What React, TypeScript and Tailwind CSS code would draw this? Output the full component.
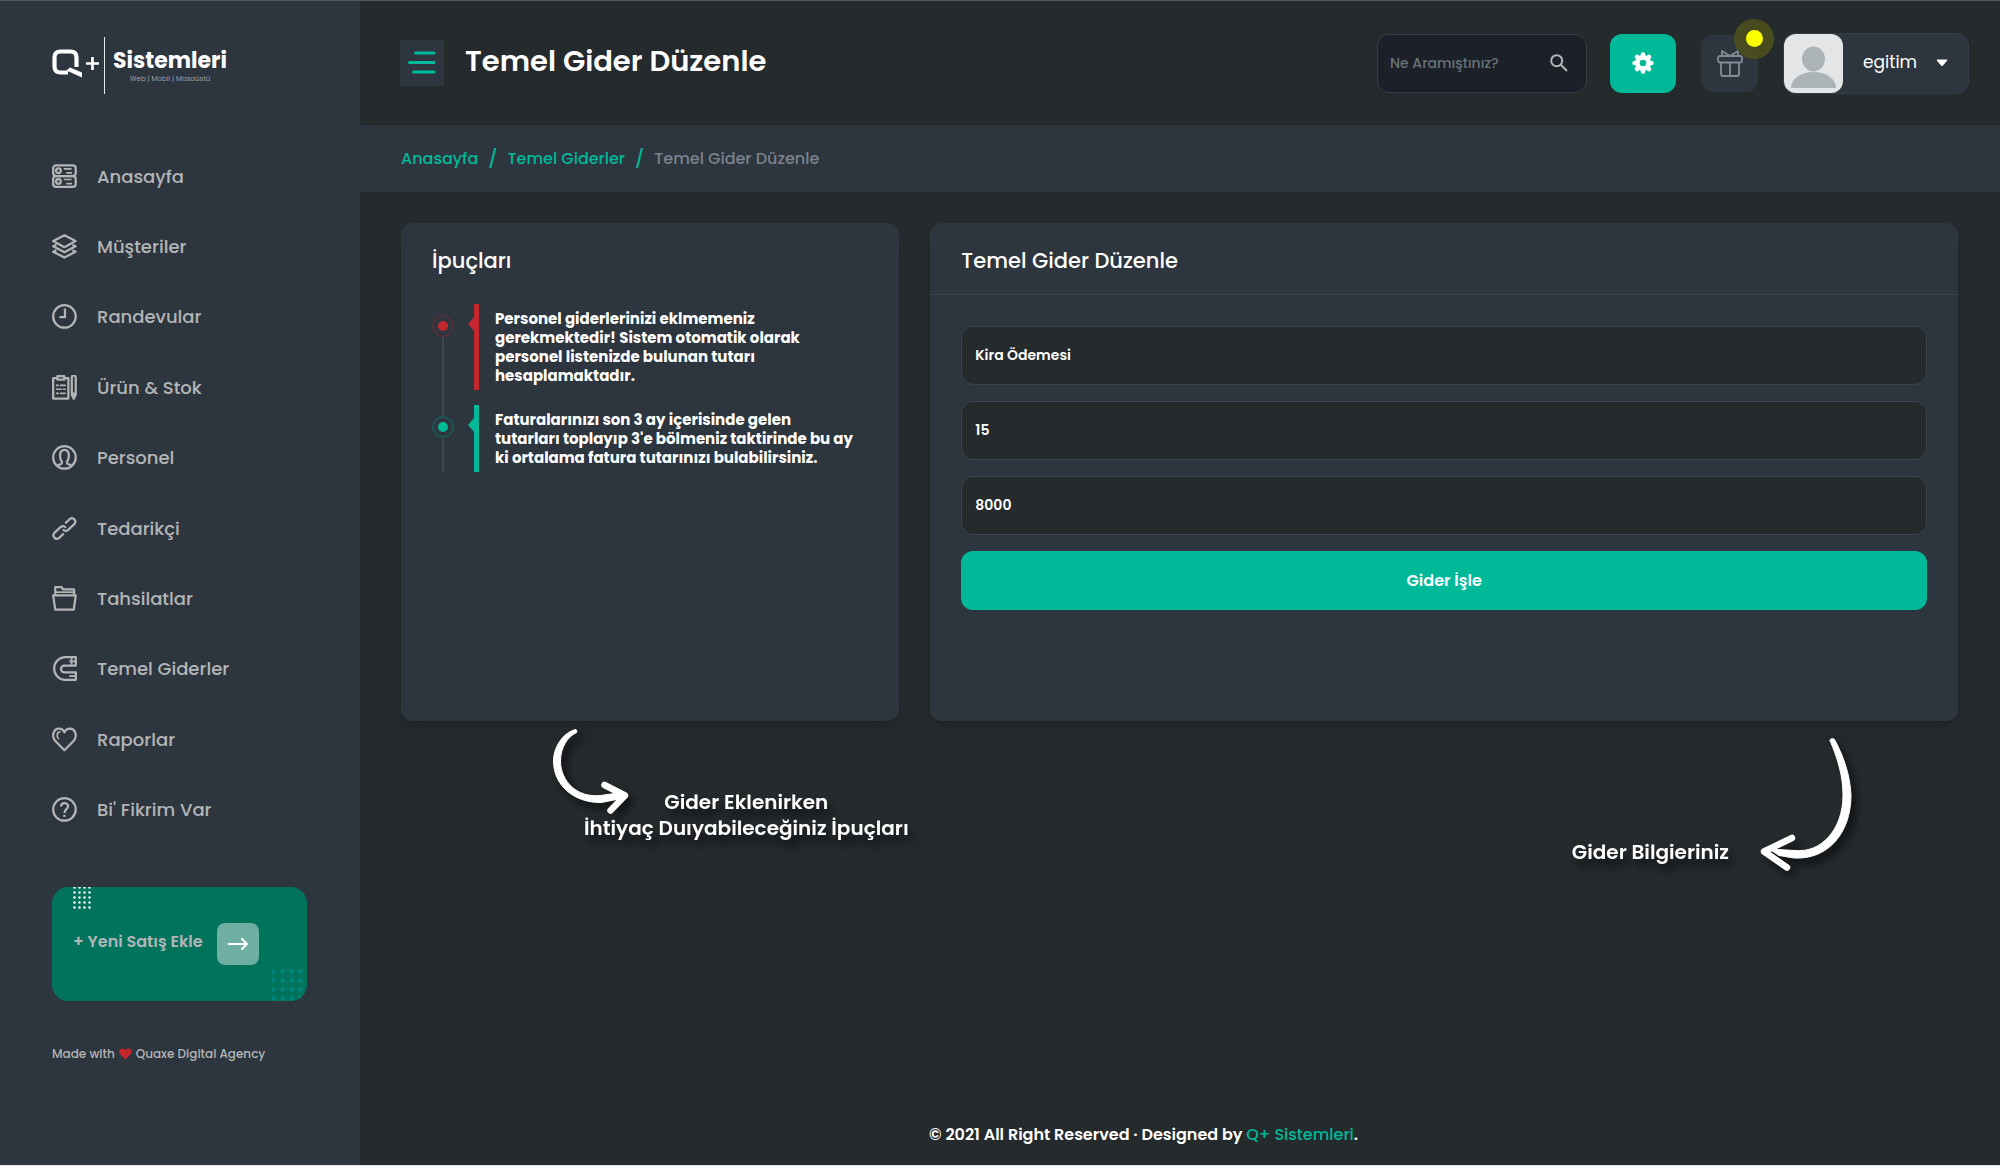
import type { ReactNode } from "react"

const icons: Record<string, ReactNode> = {
  server: (
    <>
      <rect x="1.2" y="1.5" width="23" height="10.8" rx="3" />
      <rect x="1.2" y="12.3" width="23" height="11" rx="3" />
      <circle cx="6.6" cy="6.9" r="2.4" />
      <circle cx="6.6" cy="17.8" r="2.4" />
      <path strokeWidth="1.7" d="M12 5h8M14.500 9h6M12 15.800h8M14.500 20h6" />
    </>
  ),
  layers: <path d="M12.700 1.200 24 7.200 12.700 13.400 1.200 7.200ZM4.500 11 1.200 12.600 12.700 18.700 24 12.600 20.800 11M4.500 16.500 1.200 18.100 12.700 24 24 18.100 20.800 16.500" />,
  clock: (
    <>
      <circle cx="12.700" cy="12.700" r="11.500" />
      <path d="M13.200 4.500v9H7.500" />
    </>
  ),
  clipboard: (
    <>
      <path d="M5 3.200H1.200v20.800h15.500V3.200H13" />
      <path d="M5.500 1.200h7v3.600h-7z" />
      <path strokeWidth="1.700" d="M4 10.500h3M8 10.500h6M4 14.500h6M11 14.500h3M4 18.700h3M8 18.700h6" />
      <path d="M20.200 2.500a2 2 0 0 1 4 0V20l-2 4.200-2-4.200ZM20.200 19h4M22.200 20v3" />
    </>
  ),
  person: (
    <>
      <circle cx="12.700" cy="12.700" r="11.500" />
      <path d="M5.500 21.200c.8-1.300 4.700-1.200 4.700-3.200 0-1.600-2-2.800-2-6.800 0-3.800 1.500-6.200 4.500-6.200s4.500 2.400 4.500 6.200c0 4-2 5.200-2 6.800 0 2 3.900 1.900 4.700 3.200" />
    </>
  ),
  link: <path d="M13.500 7.500 18.200 3a3.500 3.500 0 0 1 4.800 5L16.500 14.200c-1.800 1.600-4.200 1.300-5.300-.7M12 17.800 7 22.500a3.500 3.500 0 0 1-4.800-5L8.700 11.300c1.800-1.600 4.200-1.300 5.300.7" />,
  folder: (
    <>
      <path d="M3.300 9V1.200h6.500l1.500 2.300h11.200V9" />
      <path strokeWidth="1.800" d="M4 6.300h18" />
      <path d="M1.200 9.600h23l-2 14.500H3.300Z" />
    </>
  ),
  magnet: (
    <>
      <path d="M24.300 1.200H12.700a11.600 11.600 0 0 0 0 23.100h11.600v-7.600H12.700a3.500 3.500 0 0 1 0-7h11.600Z" />
      <path strokeWidth="1.800" d="M20 1.500V9M24 5.400h-6.500M17.500 20.500h6.500" />
    </>
  ),
  heart: (
    <>
      <path d="M12.700 23.700 3.200 14C-.5 9.800 1.200 1.700 7.200 1.700c2.800 0 4.500 1.500 5.500 3.800 1-2.300 2.700-3.800 5.500-3.800 6 0 7.700 8.100 4 12.300Z" />
      <path strokeWidth="1.700" d="M8.500 5c-3.500 0-4.500 4.500-1.500 7.500" />
    </>
  ),
  help: (
    <>
      <circle cx="12.700" cy="12.700" r="11.500" />
      <path d="M9.200 9.800c0-4.700 7.200-4.700 7.200-.4 0 3-3.700 3-3.700 6.800M12.700 18.200v2.200" />
    </>
  ),
}

const menu = [
  { icon: "server", label: "Anasayfa" },
  { icon: "layers", label: "Müşteriler" },
  { icon: "clock", label: "Randevular" },
  { icon: "clipboard", label: "Ürün & Stok" },
  { icon: "person", label: "Personel" },
  { icon: "link", label: "Tedarikçi" },
  { icon: "folder", label: "Tahsilatlar" },
  { icon: "magnet", label: "Temel Giderler" },
  { icon: "heart", label: "Raporlar" },
  { icon: "help", label: "Bi' Fikrim Var" },
]

const Dots = ({ cols, rows, step, r, className }: { cols: number; rows: number; step: number; r: number; className: string }) => (
  <svg className={className} width={cols * step} height={rows * step} fill="currentColor" aria-hidden="true">
    {Array.from({ length: cols * rows }, (_, i) => (
      <circle key={i} cx={(i % cols) * step + step / 2} cy={Math.floor(i / cols) * step + step / 2} r={r} />
    ))}
  </svg>
)

const Logo = () => (
  <a href="#" className="flex h-[57px] items-center text-white">
    <svg className="mb-1" width="48" height="34" viewBox="0 0 48 34" fill="none" stroke="currentColor" aria-hidden="true">
      <path strokeWidth="4.200" d="M16 25.500H8.500Q2.500 25.500 2.500 19.500V10.500Q2.500 4.500 8.500 4.500h10q6 0 6 6V20" />
      <path fill="currentColor" stroke="none" d="M18 20.500 30 25.500v5L14.500 23.500Z" />
      <path strokeWidth="2.700" d="M34 16.500h13M40.500 10v13" />
    </svg>
    <span className="ml-1 h-full w-px bg-gray-200" />
    <span className="ml-2 flex flex-col items-center">
      <span className="text-[22px] leading-[26px] font-bold">Sistemleri</span>
      <span className="text-[7px] leading-[9px] text-gray-400">Web | Mobil | Masaüstü</span>
    </span>
  </a>
)

const Sidebar = () => (
  <aside className="w-[360px] shrink-0 bg-[#2d353e] px-[52px] pt-9 text-[#b4b5b7]">
    <Logo />
    <nav className="mt-[47px] grid min-h-[704px] auto-rows-fr">
      {menu.map((item) => (
        <a key={item.label} href="#" className="flex items-center gap-5 text-[18px] font-medium">
          <svg width="25" height="25" viewBox="0 0 25.500 25.500" fill="none" stroke="currentColor" strokeWidth="2.300" strokeLinejoin="round" aria-hidden="true">
            {icons[item.icon]}
          </svg>
          {item.label}
        </a>
      ))}
    </nav>

    <div className="relative mt-[42px] flex h-[114px] w-[255px] items-center gap-[14px] overflow-hidden rounded-2xl bg-[#00735c] pl-[21px]">
      <Dots cols={4} rows={5} step={5} r={1.2} className="absolute -top-0.5 left-5 text-white" />
      <Dots cols={4} rows={4} step={9} r={2.2} className="absolute right-0.5 -bottom-0.5 text-[#00877a]" />
      <span className="pb-1 text-[16px] font-semibold whitespace-nowrap">+ Yeni Satış Ekle</span>
      <button type="button" aria-label="Yeni Satış Ekle" className="flex size-[42px] items-center justify-center rounded-lg bg-[#6eafa3] text-white">
        <svg width="22" height="14" viewBox="0 0 22 14" fill="none" stroke="currentColor" strokeWidth="2" strokeLinecap="round" strokeLinejoin="round" aria-hidden="true">
          <path d="M1.500 7h18.500M15 2l5 5-5 5" />
        </svg>
      </button>
    </div>

    <p className="mt-[43px] flex items-center text-[12px] leading-5 font-medium">
      Made with
      <svg className="mx-1" width="13" height="12" viewBox="0 0 13 12" fill="#c4262e" aria-hidden="true">
        <path d="M6.500 11.500 1.200 6.200C-1 3.500.8.500 3.400.5c1.400 0 2.500.7 3.100 1.800C7.100 1.200 8.200.5 9.600.5c2.600 0 4.400 3 2.200 5.700Z" />
      </svg>
      Quaxe Digital Agency
    </p>
  </aside>
)

const Header = () => (
  <header className="flex h-[124px] items-start pr-[31px] pl-10">
    <button type="button" aria-label="Menü" className="mt-[39px] flex h-[46px] w-11 items-center justify-center bg-[#2d353e]">
      <svg width="28" height="24" viewBox="0 0 28 24" stroke="#00b998" strokeWidth="3" strokeLinecap="round" aria-hidden="true">
        <path d="M7.500 2h18.500M1.500 11.500h24.500M5.500 21h20.500" />
      </svg>
    </button>
    <h1 className="mt-[38px] ml-[21px] text-[29px] leading-[44px] font-semibold text-white">Temel Gider Düzenle</h1>

    <div className="mt-8 ml-auto flex h-[60px] items-center">
      <label className="flex h-[59px] w-[210px] items-center rounded-xl border border-[#363d46] bg-[#1c2028] pr-[18px] pl-3">
        <input type="search" aria-label="Ara" placeholder="Ne Aramıştınız?" className="min-w-0 flex-1 bg-transparent text-[14px] font-medium text-white outline-none placeholder:text-[#68727a]" />
        <svg width="18" height="18" viewBox="0 0 18 18" fill="none" stroke="#b4b5b7" strokeWidth="2" aria-hidden="true">
          <circle cx="6.700" cy="6.700" r="5.500" />
          <path d="m10.800 10.800 6.200 6.200" />
        </svg>
      </label>
      <button type="button" aria-label="Ayarlar" className="ml-[23px] flex h-[59px] w-[66px] items-center justify-center rounded-xl bg-[#00b998]">
        <svg width="22" height="22" viewBox="0 0 22 22" aria-hidden="true">
          <circle cx="11" cy="11" r="5.600" fill="none" stroke="#fff" strokeWidth="4.600" />
          <path stroke="#fff" strokeWidth="4.600" strokeLinecap="round" d="M11 2.600v1.500M11 17.900v1.500M2.600 11h1.500M17.900 11h1.500M5 5l1 1M16 16l1 1M5 17l1-1M16 6l1-1" />
        </svg>
      </button>
      <button type="button" aria-label="Hediyeler" className="relative ml-[25px] flex h-[57px] w-[57px] items-center justify-center rounded-xl bg-[#2d353e]">
        <svg width="26" height="27" viewBox="0 0 26 27" fill="none" stroke="#818b96" strokeWidth="1.800" strokeLinejoin="round" aria-hidden="true">
          <rect x="1" y="6" width="24" height="6.500" rx="2" />
          <path d="M4 12.500V24a2 2 0 0 0 2 2h14a2 2 0 0 0 2-2V12.500M13 12.500V26M13 6 5 1v5M13 6l8-5v5" />
        </svg>
        <span className="absolute -top-4 -right-4 flex size-10 items-center justify-center rounded-full bg-[#4b4f1c]/90">
          <span className="size-[17px] rounded-full bg-[#fbff00]" />
        </span>
      </button>
      <button type="button" className="ml-[25px] flex h-[61px] w-[186px] items-center rounded-xl border border-[#363d46] bg-[#2d353e] text-[17px] text-white">
        <svg className="rounded-xl bg-[#e4e5e7]" width="59" height="59" viewBox="0 0 59 59" fill="#abb3b7" aria-hidden="true">
          <ellipse cx="29.500" cy="25" rx="11.500" ry="12.500" />
          <path d="M7 54c0-9 9-16 22.500-16S52 45 52 54Z" />
        </svg>
        <span className="ml-5">egitim</span>
        <svg className="mr-[20px] ml-auto" width="12" height="8" viewBox="0 0 12 8" fill="#fff" aria-hidden="true">
          <path d="M1.500.5h9q1.500 0 .5 1.300L7 6.500q-1 1-2 0L1 1.800Q0 .5 1.500.5" />
        </svg>
      </button>
    </div>
  </header>
)

const Tip = ({ bar, dot, ring, children }: { bar: string; dot: string; ring: string; children: ReactNode }) => (
  <li className="flex">
    <div className="flex w-[22px] flex-col items-center pt-[11px]">
      <span className={`flex size-[22px] shrink-0 items-center justify-center rounded-full border-2 ${ring}`}>
        <span className={`size-[10px] rounded-full ${dot}`} />
      </span>
      <span className="-mb-[26px] w-[2px] flex-1 bg-[#3d454f]" />
    </div>
    <svg className={`mt-[13px] ml-[14px] ${bar}`} width="6" height="14" viewBox="0 0 6 14" fill="currentColor" aria-hidden="true">
      <path d="M6 0v14L0 7Z" />
    </svg>
    <p className={`border-l-[5px] py-[5px] pl-4 text-[15px] leading-[19px] font-bold whitespace-nowrap ${bar}`}>
      <span className="text-white">{children}</span>
    </p>
  </li>
)

const Tips = () => (
  <section className="relative h-[498px] rounded-xl bg-[#2d353e] px-[31px] pt-[22px] shadow-lg">
    <h2 className="text-[21px] leading-8 font-medium text-white">İpuçları</h2>
    <ul className="mt-[27px] space-y-[15px] overflow-hidden">
      <Tip bar="border-[#c4262e] text-[#c4262e]" dot="bg-[#c4262e]" ring="border-[#4d323b]">
        Personel giderlerinizi eklmemeniz<br />gerekmektedir! Sistem otomatik olarak<br />personel listenizde bulunan tutarı<br />hesaplamaktadır.
      </Tip>
      <Tip bar="border-[#00b998] text-[#00b998]" dot="bg-[#00b998]" ring="border-[#1f5452]">
        Faturalarınızı son 3 ay içerisinde gelen<br />tutarları toplayıp 3'e bölmeniz taktirinde bu ay<br />ki ortalama fatura tutarınızı bulabilirsiniz.
      </Tip>
    </ul>

    {/* callout under the card */}
    <div className="absolute top-full left-[151px] text-white">
      <svg className="mt-1 drop-shadow-[5px_6px_4px_rgba(0,0,0,0.6)]" width="80" height="92" viewBox="0 0 80 92" fill="none" stroke="currentColor" strokeLinecap="round" strokeLinejoin="round" aria-hidden="true">
        <path fill="currentColor" strokeWidth="1" d="M23.500 4.500C10 8 1.500 23 1.500 36c0 24 20 42 48 41.500l20-4v-6l-21 3C25 73 8.500 56 8.500 36 8.500 23 15 12 24.500 7.500q1.500-2.500-1-3" />
        <path strokeWidth="6.500" d="M52.500 60 73 70.500 58.500 85.500" />
      </svg>
      <p className="-mt-7 ml-8 text-center text-[20px] leading-[26px] font-semibold whitespace-nowrap drop-shadow-[5px_8px_5px_rgba(0,0,0,0.6)]">
        Gider Eklenirken<br />İhtiyaç Duıyabileceğiniz İpuçları
      </p>
    </div>
  </section>
)

const ExpenseForm = () => (
  <section className="relative col-span-2 h-[498px] rounded-xl bg-[#2d353e] shadow-lg">
    <h2 className="border-b border-[#3a424c] px-[31px] pt-[22px] pb-[17px] text-[21px] leading-8 font-medium text-white">Temel Gider Düzenle</h2>
    <form className="flex flex-col gap-4 px-[31px] pt-[31px]" onSubmit={(e) => e.preventDefault()}>
      <input aria-label="Gider adı" defaultValue="Kira Ödemesi" className="h-[59px] rounded-xl border border-[#3a424c] bg-[#252a2d] px-[13px] text-[14px] font-semibold text-white" />
      <input aria-label="Ödeme günü" defaultValue="15" className="h-[59px] rounded-xl border border-[#3a424c] bg-[#252a2d] px-[13px] text-[14px] font-semibold text-white" />
      <input aria-label="Tutar" defaultValue="8000" className="h-[59px] rounded-xl border border-[#3a424c] bg-[#252a2d] px-[13px] text-[14px] font-semibold text-white" />
      <button type="submit" className="h-[59px] rounded-xl bg-[#00b998] text-[16px] font-semibold text-white">Gider İşle</button>
    </form>

    {/* callout under the card */}
    <div className="absolute top-full right-[105px] flex items-end gap-[30px] text-white">
      <p className="mb-2 text-[20px] leading-[26px] font-semibold whitespace-nowrap drop-shadow-[5px_8px_5px_rgba(0,0,0,0.6)]">Gider Bilgieriniz</p>
      <svg className="mt-4 drop-shadow-[5px_6px_4px_rgba(0,0,0,0.6)]" width="94" height="136" viewBox="0 0 94 136" fill="none" stroke="currentColor" strokeLinecap="round" strokeLinejoin="round" aria-hidden="true">
        <path fill="currentColor" strokeWidth="1" d="M71 3.500C78 20 84 38 84 58c0 35-22 58-48 55.500L10 112l10 6.500 15 2.500C68 123 92 97 92 58 91 37 84 18 75.500 2.500Q72 0 71 3.500" />
        <path strokeWidth="6.500" d="M33 101 5 114.500 28 130.500" />
      </svg>
    </div>
  </section>
)

const App = () => {
  return (
    <div className="flex min-h-screen border-t border-t-[#4f5b5b] border-b border-b-gray-200 bg-[#252a2d] font-['Poppins','Inter',sans-serif]">
      <Sidebar />
      <div className="flex min-w-0 flex-1 flex-col">
        <Header />
        <nav aria-label="Breadcrumb" className="flex h-[67px] items-center gap-[10px] bg-[#2d353e] px-[41px] text-[16px] font-medium text-[#00b998]">
          <a href="#">Anasayfa</a>
          <span className="text-[18px]">/</span>
          <a href="#">Temel Giderler</a>
          <span className="text-[18px]">/</span>
          <span className="text-[#7b828c]">Temel Gider Düzenle</span>
        </nav>

        <main className="grid flex-1 grid-cols-3 items-start gap-[31px] pt-[31px] pr-[42px] pl-[41px]">
          <Tips />
          <ExpenseForm />
        </main>

        <footer className="pr-[73px] pb-[18px] text-center text-[16px] leading-6 font-semibold text-white">
          © 2021 All Right Reserved · Designed by <a href="#" className="font-medium text-[#00b998]">Q+ Sistemleri</a>.
        </footer>
      </div>
    </div>
  )
}

export default App
